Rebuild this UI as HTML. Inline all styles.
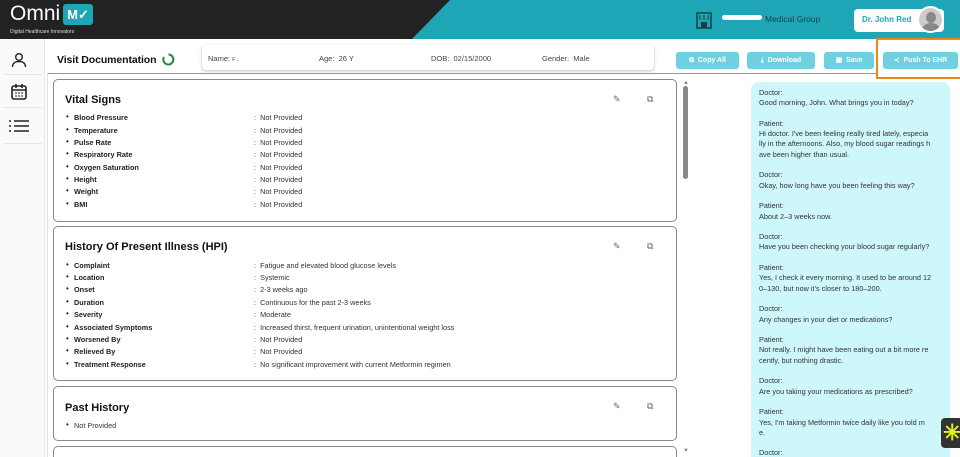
<!DOCTYPE html>
<html><head><meta charset="utf-8"><style>
*{margin:0;padding:0;box-sizing:border-box}
html,body{width:960px;height:457px;overflow:hidden}
body{background:#fff;font-family:"Liberation Sans",sans-serif;position:relative;color:#222}
.a{position:absolute}
.hdr{left:0;top:0;width:960px;height:39px;background:#1fa6b6}
.dark{left:0;top:0;width:960px;height:39px;background:#222;clip-path:polygon(0 0,450px 0,412px 39px,0 39px)}
.card{position:absolute;left:53px;width:624px;border:1px solid #888;border-radius:5px;background:#fff}
.card h2{position:absolute;left:11px;font-size:11px;font-weight:bold;color:#111}
.row{position:absolute;left:12px;font-size:7.3px;width:600px;height:10px}
.row b{position:absolute;left:8px}
.row .d{position:absolute;left:0;top:-1px;font-size:8px}
.row span.v{position:absolute;left:188px;color:#333}
.btn{position:absolute;top:52px;height:17px;background:#6fd0df;border-radius:3px;color:#fff;font-size:7px;font-weight:bold;text-align:center;line-height:17px}
.chat{left:751px;top:82px;width:199px;height:375px;overflow:hidden;background:#cdf7fb;border-radius:8px 8px 0 0;padding:6px 8px;font-size:7.3px;line-height:10.3px;color:#333}
.ic{position:absolute;font-size:9px;color:#666}
</style></head><body>
<div class="a hdr"></div>
<div class="a dark"></div>
<div class="a" style="left:10px;top:2px;color:#fff;font-size:21px">Omni</div>
<div class="a" style="left:63px;top:4px;width:30px;height:21px;background:#1fa6b6;border-radius:3px;color:#fff;font-weight:bold;font-size:13px;text-align:center;line-height:21px">M✓</div>
<div class="a" style="left:10px;top:29px;color:#ddd;font-size:5px">Digital Healthcare Innovators</div>
<svg class="a" style="left:696px;top:12px" width="16" height="17" viewBox="0 0 16 17"><rect x="1" y="1" width="14" height="15" fill="none" stroke="#1d3f48" stroke-width="1.5"/><rect x="5" y="10" width="6" height="6" fill="#1d3f48"/><path d="M4 3v5M12 3v5M8 3v5" stroke="#1d3f48"/></svg>
<div class="a" style="left:722px;top:15px;width:40px;height:5px;background:#fff;border-radius:3px"></div>
<div class="a" style="left:765px;top:14px;font-size:8.5px;color:#1d3f48">Medical Group</div>
<div class="a" style="left:854px;top:9px;width:90px;height:23px;background:#fff;border-radius:4px"></div>
<div class="a" style="left:862px;top:15px;font-size:8px;color:#1fa6b6;font-weight:bold">Dr. John Red</div>
<div class="a" style="left:917px;top:6px;width:27px;height:27px;border-radius:50%;background:#ccc;border:2px solid #fff;overflow:hidden"><div class="a" style="left:7px;top:4px;width:10px;height:11px;border-radius:50%;background:#888"></div><div class="a" style="left:3px;top:15px;width:18px;height:14px;border-radius:50%;background:#888"></div></div>
<div class="a" style="left:0;top:39px;width:45px;height:418px;background:#fafafa;border-right:1px solid #e6e6e6"></div>
<div class="a" style="left:4px;top:74px;width:38px;height:1px;background:#e6e6e6"></div>
<div class="a" style="left:4px;top:107px;width:38px;height:1px;background:#e6e6e6"></div>
<div class="a" style="left:4px;top:143px;width:38px;height:1px;background:#e6e6e6"></div>
<svg class="a" style="left:11px;top:52px" width="16" height="16" viewBox="0 0 16 16"><circle cx="8" cy="5" r="3.3" fill="none" stroke="#222" stroke-width="1.4"/><path d="M1.5 15c0-4 3-5.5 6.5-5.5s6.5 1.5 6.5 5.5" fill="none" stroke="#222" stroke-width="1.4"/></svg>
<svg class="a" style="left:11px;top:83px" width="16" height="17" viewBox="0 0 16 17"><rect x="1" y="3" width="14" height="13" rx="2" fill="none" stroke="#222" stroke-width="1.6"/><path d="M1 7h14M5 1v4M11 1v4" stroke="#222" stroke-width="1.6"/><path d="M4 10h2M7 10h2M10 10h2M4 13h2M7 13h2M10 13h2" stroke="#222"/></svg>
<svg class="a" style="left:9px;top:119px" width="20" height="14" viewBox="0 0 20 14"><path d="M0 2h2M0 7h2M0 12h2M5 2h15M5 7h15M5 12h15" stroke="#222" stroke-width="1.6"/></svg>
<div class="a" style="left:57px;top:54px;font-size:10.5px;font-weight:bold;color:#111;letter-spacing:-0.1px">Visit Documentation</div>
<svg class="a" style="left:162px;top:53px" width="13" height="13" viewBox="0 0 13 13"><path d="M6.5 1.5A5 5 0 1 1 2 4" fill="none" stroke="#1e8a3c" stroke-width="2"/></svg>
<div class="a" style="left:202px;top:45px;width:452px;height:25px;border-radius:4px;background:#fff;box-shadow:0 1px 3px rgba(0,0,0,.25)"></div>
<div class="a" style="left:208px;top:54px;font-size:7.5px;color:#444">Name: <span style="font-size:5px">F ..</span></div>
<div class="a" style="left:319px;top:54px;font-size:7.5px;color:#444">Age:&nbsp; 26 Y</div>
<div class="a" style="left:431px;top:54px;font-size:7.5px;color:#444">DOB:&nbsp; 02/15/2000</div>
<div class="a" style="left:542px;top:54px;font-size:7.5px;color:#444">Gender:&nbsp; Male</div>
<div class="btn" style="left:676px;width:63px">⧉&nbsp; Copy All</div>
<div class="btn" style="left:747px;width:68px">⤓&nbsp; Download</div>
<div class="btn" style="left:824px;width:50px">▣&nbsp; Save</div>
<div class="btn" style="left:883px;width:75px">≺&nbsp; Push To EHR</div>
<div class="a" style="left:876px;top:38px;width:84px;height:41px;border:2px solid #f0851a;border-right:none"></div>
<div class="a" style="left:47px;top:73px;width:829px;height:1px;background:#999"></div>
<div class="a" style="left:47px;top:73px;width:1px;height:384px;background:#ddd"></div>
<div class="a" style="left:683px;top:80px;font-size:6px;color:#888">▲</div>
<div class="a" style="left:683px;top:86px;width:5px;height:93px;background:#888;border-radius:3px"></div>
<div class="a" style="left:683px;top:448px;font-size:6px;color:#888">▼</div>
<div class="card" style="top:79px;height:143px">
<h2 style="top:14px">Vital Signs</h2>
<div class="ic" style="left:559px;top:14px">✎</div><div class="ic" style="left:593px;top:14px">⧉</div>
<div class="row" style="top:33px"><span class="d">•</span><b>Blood Pressure</b><span class="v">:&nbsp; Not Provided</span></div>
<div class="row" style="top:46px"><span class="d">•</span><b>Temperature</b><span class="v">:&nbsp; Not Provided</span></div>
<div class="row" style="top:58px"><span class="d">•</span><b>Pulse Rate</b><span class="v">:&nbsp; Not Provided</span></div>
<div class="row" style="top:70px"><span class="d">•</span><b>Respiratory Rate</b><span class="v">:&nbsp; Not Provided</span></div>
<div class="row" style="top:83px"><span class="d">•</span><b>Oxygen Saturation</b><span class="v">:&nbsp; Not Provided</span></div>
<div class="row" style="top:95px"><span class="d">•</span><b>Height</b><span class="v">:&nbsp; Not Provided</span></div>
<div class="row" style="top:107px"><span class="d">•</span><b>Weight</b><span class="v">:&nbsp; Not Provided</span></div>
<div class="row" style="top:120px"><span class="d">•</span><b>BMI</b><span class="v">:&nbsp; Not Provided</span></div>
</div>
<div class="card" style="top:226px;height:155px">
<h2 style="top:14px">History Of Present Illness (HPI)</h2>
<div class="ic" style="left:559px;top:14px">✎</div><div class="ic" style="left:593px;top:14px">⧉</div>
<div class="row" style="top:34px"><span class="d">•</span><b>Complaint</b><span class="v">:&nbsp; Fatigue and elevated blood glucose levels</span></div>
<div class="row" style="top:46px"><span class="d">•</span><b>Location</b><span class="v">:&nbsp; Systemic</span></div>
<div class="row" style="top:58px"><span class="d">•</span><b>Onset</b><span class="v">:&nbsp; 2-3 weeks ago</span></div>
<div class="row" style="top:71px"><span class="d">•</span><b>Duration</b><span class="v">:&nbsp; Continuous for the past 2-3 weeks</span></div>
<div class="row" style="top:83px"><span class="d">•</span><b>Severity</b><span class="v">:&nbsp; Moderate</span></div>
<div class="row" style="top:96px"><span class="d">•</span><b>Associated Symptoms</b><span class="v">:&nbsp; Increased thirst, frequent urination, unintentional weight loss</span></div>
<div class="row" style="top:108px"><span class="d">•</span><b>Worsened By</b><span class="v">:&nbsp; Not Provided</span></div>
<div class="row" style="top:120px"><span class="d">•</span><b>Relieved By</b><span class="v">:&nbsp; Not Provided</span></div>
<div class="row" style="top:133px"><span class="d">•</span><b>Treatment Response</b><span class="v">:&nbsp; No significant improvement with current Metformin regimen</span></div>
</div>
<div class="card" style="top:386px;height:55px">
<h2 style="top:15px">Past History</h2>
<div class="ic" style="left:559px;top:14px">✎</div><div class="ic" style="left:593px;top:14px">⧉</div>
<div class="row" style="top:34px"><span class="d">•</span><span style="position:absolute;left:8px;color:#333">Not Provided</span></div>
</div>
<div class="a" style="left:53px;top:446px;width:624px;height:11px;border:1px solid #888;border-bottom:none;border-radius:5px 5px 0 0"></div>
<div class="a chat">Doctor:<br>Good morning, John. What brings you in today?<br><br>Patient:<br>Hi doctor. I've been feeling really tired lately, especia<br>lly in the afternoons. Also, my blood sugar readings h<br>ave been higher than usual.<br><br>Doctor:<br>Okay, how long have you been feeling this way?<br><br>Patient:<br>About 2–3 weeks now.<br><br>Doctor:<br>Have you been checking your blood sugar regularly?<br><br>Patient:<br>Yes, I check it every morning. It used to be around 12<br>0–130, but now it's closer to 180–200.<br><br>Doctor:<br>Any changes in your diet or medications?<br><br>Patient:<br>Not really. I might have been eating out a bit more re<br>cently, but nothing drastic.<br><br>Doctor:<br>Are you taking your medications as prescribed?<br><br>Patient:<br>Yes, I'm taking Metformin twice daily like you told m<br>e.<br><br>Doctor:</div>
<div class="a" style="left:941px;top:418px;width:19px;height:30px;background:#333;border-radius:4px 0 0 4px;color:#e6f01a;font-size:22px;line-height:30px;padding-left:2px;font-weight:bold">✳</div>
</body></html>
